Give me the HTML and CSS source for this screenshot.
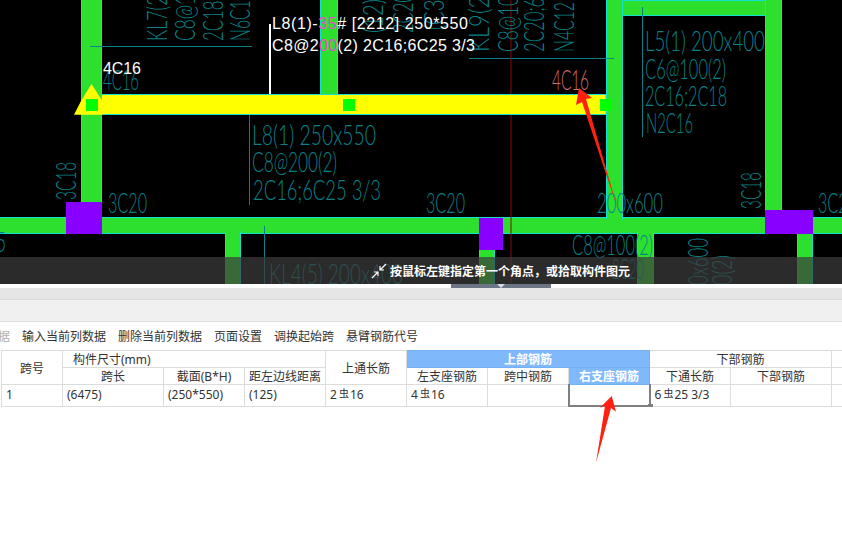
FILE: index.html
```html
<!DOCTYPE html>
<html lang="zh-CN">
<head>
    <meta charset="UTF-8">
    <title>梁平法表格</title>
    <link rel="stylesheet" href="styles.css">
</head>
<body>
    <div class="cad">
        <svg class="drawing" width="842" height="284" viewBox="0 0 842 284">
            <!-- beams and walls -->
            <rect class="beam" x="-5" y="217.5" width="860" height="16"/>
            <rect class="beam" x="81.5" y="-5" width="20" height="224"/>
            <rect class="beam" x="320.5" y="-5" width="17" height="100"/>
            <rect class="beam" x="606.5" y="-5" width="16" height="224"/>
            <rect class="beam" x="765.5" y="-5" width="16" height="224"/>
            <rect class="beam" x="622.5" y="0.5" width="143" height="15"/>
            <rect class="beam" x="225.5" y="232" width="15" height="60"/>
            <rect class="beam" x="479.5" y="249" width="15" height="45"/>
            <rect class="beam" x="637.5" y="232" width="16" height="60"/>
            <rect class="beam" x="797.5" y="232" width="15" height="60"/>
            <!-- joints, so the edge lines do not cross where beams meet -->
            <rect class="joint" x="607" y="216" width="15" height="6"/>
            <rect class="joint" x="766" y="216" width="15" height="6"/>
            <rect class="joint" x="226" y="230" width="14" height="4"/>
            <rect class="joint" x="638" y="230" width="15" height="4"/>
            <rect class="joint" x="798" y="230" width="14" height="4"/>

            <!-- leader lines -->
            <path class="leader" d="M90 46.5H252M249.5 115V205M264.5 226V285M469 58.5H614M642.5 7V137"/>
            <path class="axis" d="M511 0V285"/>
            <path class="pointer" d="M270 24V94"/>

            <!-- rotated labels on the top of the plan -->
            <text class="cad-text" transform="translate(167,41) rotate(-90)" textLength="125" lengthAdjust="spacingAndGlyphs">KL7(2) 200x500</text>
            <text class="cad-text" transform="translate(195,41) rotate(-90)" textLength="85" lengthAdjust="spacingAndGlyphs">C8@100(2)</text>
            <text class="cad-text" transform="translate(223,41) rotate(-90)" textLength="85" lengthAdjust="spacingAndGlyphs">2C18;4C20</text>
            <text class="cad-text" transform="translate(250,41) rotate(-90)" textLength="50" lengthAdjust="spacingAndGlyphs">N6C12</text>
            <text class="cad-text" transform="translate(383,33) rotate(-90)" textLength="34" lengthAdjust="spacingAndGlyphs">(12)</text>
            <text class="cad-text" transform="translate(413,33) rotate(-90)" textLength="40" lengthAdjust="spacingAndGlyphs">2C20</text>
            <text class="cad-text" transform="translate(444,30) rotate(-90)" textLength="36" lengthAdjust="spacingAndGlyphs">(C3)</text>
            <text class="cad-text" transform="translate(489,52) rotate(-90)" textLength="62" lengthAdjust="spacingAndGlyphs">KL9(2)</text>
            <text class="cad-text" transform="translate(518,52) rotate(-90)" textLength="85" lengthAdjust="spacingAndGlyphs">C8@100(2)</text>
            <text class="cad-text" transform="translate(544,52) rotate(-90)" textLength="85" lengthAdjust="spacingAndGlyphs">2C20;6C25</text>
            <text class="cad-text" transform="translate(574,52) rotate(-90)" textLength="50" lengthAdjust="spacingAndGlyphs">N4C12</text>

            <!-- labels -->
            <text class="cad-text" x="103" y="90" textLength="36" lengthAdjust="spacingAndGlyphs">4C16</text>
            <text class="cad-text" x="252" y="145" textLength="124" lengthAdjust="spacingAndGlyphs">L8(1) 250x550</text>
            <text class="cad-text" x="252" y="172" textLength="85" lengthAdjust="spacingAndGlyphs">C8@200(2)</text>
            <text class="cad-text" x="253" y="200" textLength="128" lengthAdjust="spacingAndGlyphs">2C16;6C25 3/3</text>
            <text class="cad-text" transform="translate(76,200) rotate(-90)" textLength="38" lengthAdjust="spacingAndGlyphs">3C18</text>
            <text class="cad-text" x="108" y="213" textLength="39" lengthAdjust="spacingAndGlyphs">3C20</text>
            <text class="cad-text" x="426" y="213" textLength="39" lengthAdjust="spacingAndGlyphs">3C20</text>
            <text class="cad-text" x="597" y="213" textLength="66" lengthAdjust="spacingAndGlyphs">200x600</text>
            <text class="cad-text" transform="translate(761,209) rotate(-90)" textLength="37" lengthAdjust="spacingAndGlyphs">3C18</text>
            <text class="cad-text" x="818" y="213" textLength="39" lengthAdjust="spacingAndGlyphs">3C20</text>
            <text class="cad-text" x="572" y="255" textLength="81" lengthAdjust="spacingAndGlyphs">C8@100(2)</text>
            <text class="cad-text" x="-14" y="252" textLength="20" lengthAdjust="spacingAndGlyphs">35</text>
            <text class="cad-text" x="645" y="51" textLength="120" lengthAdjust="spacingAndGlyphs">L5(1) 200x400</text>
            <text class="cad-text" x="645" y="79" textLength="81" lengthAdjust="spacingAndGlyphs">C6@100(2)</text>
            <text class="cad-text" x="645" y="106" textLength="82" lengthAdjust="spacingAndGlyphs">2C16;2C18</text>
            <text class="cad-text" x="646" y="133" textLength="47" lengthAdjust="spacingAndGlyphs">N2C16</text>
            <text class="cad-text" x="269" y="284" textLength="134" lengthAdjust="spacingAndGlyphs">KL4(5) 200x400</text>
            <text class="cad-text" x="612" y="279" textLength="32" lengthAdjust="spacingAndGlyphs">2C20</text>
            <text class="cad-text" transform="translate(708,285) rotate(-90)" textLength="47" lengthAdjust="spacingAndGlyphs">0x600</text>
            <text class="cad-text" transform="translate(732,285) rotate(-90)" textLength="30" lengthAdjust="spacingAndGlyphs">0(2)</text>
            <text class="cad-text picked" x="552" y="90" textLength="37" lengthAdjust="spacingAndGlyphs">4C16</text>

            <!-- columns -->
            <rect class="column" x="66" y="202" width="36" height="32"/>
            <rect class="column" x="479" y="218" width="24" height="32"/>
            <rect class="column" x="765" y="210" width="48" height="24"/>

            <!-- selected beam -->
            <rect class="selected-beam" x="101.5" y="94.5" width="504.5" height="20"/>
            <polygon class="selected-beam-end" points="91.5,84 103,102 103,114.7 74,114.7 81,101"/>
            <rect class="grip" x="86" y="99" width="12" height="12"/>
            <rect class="grip" x="343" y="99" width="12" height="12"/>
            <rect class="grip" x="600" y="99" width="12" height="12"/>

            <!-- beam tag in white -->
            <text class="tag" x="272" y="29" textLength="196">L8(1)-<tspan class="tag-mark">35</tspan># [2212] 250*550</text>
            <text class="tag" x="272" y="51" textLength="203">C8@2<tspan class="tag-mark">00</tspan>(2) 2C16;6C25 3/3</text>
            <text class="tag" x="103" y="74" textLength="38">4C16</text>

            <polygon class="red-arrow" points="579,88 592,98 586,99 618,210 582,102 576,105"/>
        </svg>

        <div class="hint">
            <svg class="hint-icon" width="16" height="16" viewBox="0 0 16 16">
                <path d="M1 15L7 9M3 9H7V13M15 1L9 7M13 7H9V3"/>
            </svg>
            <span>按鼠标左键指定第一个角点，或拾取构件图元</span>
        </div>
    </div>

    <div class="splitter"><div class="splitter-handle"></div></div>
    <div class="tabbar"></div>
    <div class="ribbon"></div>

    <div class="toolbar">
        <span class="tool tool-off">据</span>
        <span class="tool">输入当前列数据</span>
        <span class="tool">删除当前列数据</span>
        <span class="tool">页面设置</span>
        <span class="tool">调换起始跨</span>
        <span class="tool">悬臂钢筋代号</span>
    </div>

    <div class="grid-wrap">
        <table class="grid">
            <colgroup>
                <col class="col-no">
                <col class="col-long">
                <col class="col"><col class="col"><col class="col">
                <col class="col"><col class="col"><col class="col"><col class="col">
                <col class="col-long">
                <col class="col-end">
            </colgroup>
            <tr class="head-row">
                <th rowspan="2">跨号</th>
                <th colspan="3" class="group-left">构件尺寸(mm)</th>
                <th rowspan="2">上通长筋</th>
                <th colspan="3" class="active-head">上部钢筋</th>
                <th colspan="2">下部钢筋</th>
                <th></th>
            </tr>
            <tr class="head-row">
                <th>跨长</th>
                <th>截面(B*H)</th>
                <th>距左边线距离</th>
                <th>左支座钢筋</th>
                <th>跨中钢筋</th>
                <th class="active-head">右支座钢筋</th>
                <th>下通长筋</th>
                <th>下部钢筋</th>
                <th></th>
            </tr>
            <tr class="data-row">
                <td>1</td>
                <td>(6475)</td>
                <td>(250*550)</td>
                <td>(125)</td>
                <td>2<span class="bar-mark">虫</span>16</td>
                <td>4<span class="bar-mark">虫</span>16</td>
                <td></td>
                <td class="current-cell"></td>
                <td>6<span class="bar-mark">虫</span>25 3/3</td>
                <td></td>
                <td></td>
            </tr>
        </table>
    </div>

    <svg class="note-arrow" width="30" height="72" viewBox="0 0 30 72">
        <polygon points="16.7,1 21,16.7 16,13 1,67.7 10,11 5,12.7"/>
    </svg>
</body>
</html>
```

FILE: styles.css
```css
html, body {
    margin: 0;
    padding: 0;
    height: 100%;
    background: #fff;
    overflow: hidden;
    position: relative;
    font-family: "Noto Sans", "Noto Sans CJK SC", sans-serif;
    font-size: 12px;
    color: #333;
}

/* drawing area */
.cad {
    position: relative;
    height: 284px;
    background: #000;
    overflow: hidden;
}
.drawing {
    display: block;
}
.beam {
    fill: #2de02d;
    stroke: #12e0d0;
    stroke-width: 1;
}
.joint {
    fill: #2de02d;
}
.column {
    fill: #8800ff;
}
.leader {
    stroke: #0b7f86;
    stroke-width: 1;
    fill: none;
}
.axis {
    stroke: #8a0a0a;
    stroke-width: 1;
    fill: none;
}
.pointer {
    stroke: #fff;
    stroke-width: 2;
    fill: none;
}
.cad-text {
    font-family: Lato, "Liberation Sans", sans-serif;
    font-weight: 300;
    font-size: 27px;
    fill: #0a8087;
}
.cad-text.picked {
    fill: #d06e6e;
}
.selected-beam {
    fill: #ffff00;
    stroke: #12e0d0;
    stroke-width: 1;
}
.selected-beam-end {
    fill: #ffff00;
}
.grip {
    fill: #00ff00;
}
.tag {
    font-family: "Liberation Sans", sans-serif;
    font-size: 16px;
    fill: #fff;
}
.tag-mark {
    fill: #e84ad0;
}
.red-arrow {
    fill: #ff2010;
}

/* hint over the drawing */
.hint {
    position: absolute;
    left: 0;
    right: 0;
    bottom: 0;
    height: 27px;
    display: flex;
    align-items: center;
    gap: 3px;
    padding-left: 371px;
    box-sizing: border-box;
    background: rgba(60, 60, 60, 0.72);
    color: #fff;
    font-weight: bold;
}
.hint-icon path {
    stroke: #fff;
    stroke-width: 1.2;
    fill: none;
}

/* bars under the drawing */
.splitter {
    height: 4px;
    display: flex;
    justify-content: center;
    padding-left: 160px;
}
.splitter-handle {
    position: relative;
    width: 100px;
    height: 4px;
    background: #6b7585;
}
.splitter-handle::after {
    content: "";
    position: absolute;
    left: 46px;
    top: 0;
    border-left: 4px solid transparent;
    border-right: 4px solid transparent;
    border-top: 4px solid #d8dce0;
}
.tabbar {
    height: 11px;
    background: #e6e6e6;
    border-bottom: 1px solid #d9d9d9;
}
.ribbon {
    height: 21px;
    background: #f0f0f0;
    border-bottom: 1px solid #dedede;
}
.toolbar {
    height: 28px;
    display: flex;
    align-items: center;
    gap: 12px;
    margin-left: -2px;
    white-space: nowrap;
}
.tool-off {
    color: #b0b0b0;
}

/* spreadsheet */
.grid-wrap {
    overflow: hidden;
    padding-left: 1px;
}
.grid {
    border-collapse: collapse;
    table-layout: fixed;
    width: 861px;
}
.col-no { width: 61px; }
.col-long { width: 101px; }
.col { width: 81px; }
.col-end { width: 30px; }

.grid th, .grid td {
    border: 1px solid #dcdcdc;
    padding: 0;
    font-weight: normal;
    white-space: nowrap;
    overflow: hidden;
}
.grid th {
    text-align: center;
    padding-top: 2px;
    line-height: 14px;
    height: 14px;
}
.grid td {
    text-align: left;
    padding-left: 4px;
    height: 20px;
    line-height: 20px;
}
.grid th.group-left {
    text-align: left;
    padding-left: 10px;
}
.grid th.active-head {
    background: #7fb8fb;
    border-color: #74b0f4;
    color: #fff;
    font-weight: bold;
}
.bar-mark {
    font-size: 10px;
    position: relative;
    top: -2px;
    margin: 0 1px 0 2px;
}
.grid td.current-cell {
    position: relative;
    overflow: visible;
    border: 0;
    border-left: 2px solid #808080;
    border-bottom: 2px solid #808080;
    border-right: 2px solid #808080;
}
.current-cell::after {
    content: "";
    position: absolute;
    right: -4px;
    bottom: -4px;
    width: 5px;
    height: 5px;
    background: #808080;
}

/* hand drawn arrow pointing at the cell */
.note-arrow {
    position: absolute;
    left: 595px;
    top: 395px;
}
.note-arrow polygon {
    fill: #ff2010;
}
```
